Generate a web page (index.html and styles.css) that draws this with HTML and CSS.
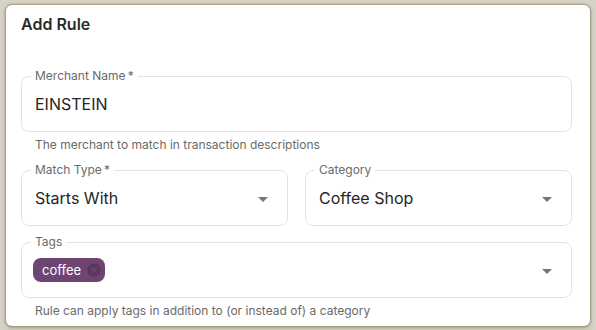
FILE: index.html
```html
<!DOCTYPE html>
<html lang="en">
  <head>
    <meta charset="UTF-8" />
    <meta name="viewport" content="width=device-width, initial-scale=1.0" />
    <title>Add Rule</title>
    <link rel="stylesheet" href="styles.css">
  </head>
  <body>
    <div class="dialog">
      <h2 class="title">Add Rule</h2>

      <div class="form-item first">
        <div class="field">
          <label>Merchant Name&thinsp;*</label>
          <span class="value">EINSTEIN</span>
        </div>
        <p class="helper">The merchant to match in transaction descriptions</p>
      </div>

      <div class="row">
        <div class="field">
          <label>Match Type&thinsp;*</label>
          <span class="value">Starts With</span>
          <span class="arrow"></span>
        </div>
        <div class="field">
          <label>Category</label>
          <span class="value">Coffee Shop</span>
          <span class="arrow"></span>
        </div>
      </div>

      <div class="form-item">
        <div class="field tags">
          <label>Tags</label>
          <span class="chip">
            coffee
            <svg class="chip-x" viewBox="0 0 24 24" width="16" height="16">
              <path d="M12 2C6.47 2 2 6.47 2 12s4.47 10 10 10 10-4.47 10-10S17.53 2 12 2zm5 13.59L15.59 17 12 13.41 8.41 17 7 15.59 10.59 12 7 8.41 8.41 7 12 10.59 15.59 7 17 8.41 13.41 12 17 15.59z" />
            </svg>
          </span>
          <span class="arrow"></span>
        </div>
        <p class="helper">Rule can apply tags in addition to (or instead of) a category</p>
      </div>
    </div>
  </body>
</html>
```

FILE: styles.css
```css
body {
  margin: 0;
  padding: 5px 0 0 6px;
  height: 330px;
  box-sizing: border-box;
  overflow: hidden;
  background-color: #d6d3c6;
  font-family: Inter, "Noto Sans", sans-serif;
}

.dialog {
  width: 584px;
  height: 321px;
  box-sizing: border-box;
  padding: 7px 18px 0 15px;
  background-color: #fff;
  border-radius: 6px;
  box-shadow: 0 0 2px 1px rgba(120, 112, 85, 0.55), 0 2px 4px rgba(90, 80, 50, 0.3);
  overflow: hidden;
}

.title {
  margin: 0;
  font-size: 16px;
  line-height: 24px;
  font-weight: 600;
  color: #2b2b2b;
}

.form-item.first {
  margin-top: 40px;
}

.field {
  position: relative;
  height: 56px;
  box-sizing: border-box;
  border: 1px solid #e2e2e2;
  border-radius: 8px;
  display: flex;
  align-items: center;
  padding: 0 13px;
}

.field label {
  position: absolute;
  top: -9px;
  left: 9px;
  padding: 0 4px;
  background-color: #fff;
  font-size: 12px;
  line-height: 16px;
  color: #6a6a6a;
}

.value {
  font-size: 16px;
  color: #262626;
}

.arrow {
  position: absolute;
  right: 19px;
  top: 26px;
  width: 0;
  height: 0;
  border-left: 5px solid transparent;
  border-right: 5px solid transparent;
  border-top: 5px solid #777;
}

.helper {
  margin: 3px 0 0 14px;
  font-size: 12px;
  line-height: 20px;
  color: #6a6a6a;
}

.row {
  display: grid;
  grid-template-columns: 1fr 1fr;
  gap: 17px;
  margin: 15px 0 16px;
}

.tags {
  padding-left: 11px;
}

.chip {
  display: inline-flex;
  align-items: center;
  gap: 5px;
  height: 24px;
  padding: 0 3px 0 9px;
  border-radius: 8px;
  background-color: #6e4572;
  color: #fff;
  font-size: 13px;
}

.chip-x {
  fill: rgba(0, 0, 0, 0.18);
}
```
